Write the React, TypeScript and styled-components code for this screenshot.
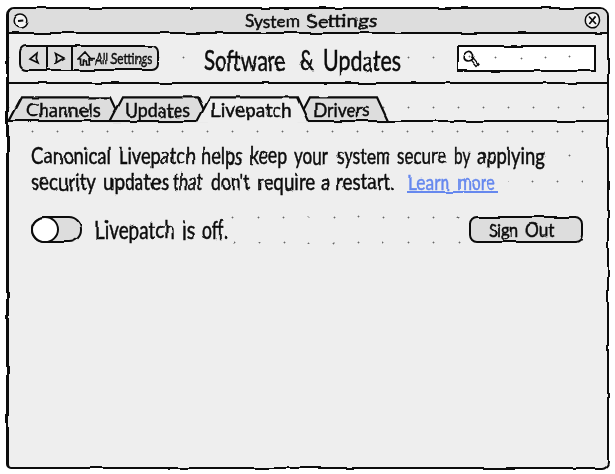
import React, { useLayoutEffect, useRef, useState } from "react";
import styled, { createGlobalStyle } from "styled-components";

const INK = "#0c0c0c";
const PAPER = "#eeeeee";
const SHADE = "#dddddd";
const LINK = "#6688ee";
const DOT = "radial-gradient(circle, #666 0.5px, transparent 1.3px)";

const GlobalStyle = createGlobalStyle`
  body { margin: 0; background: #fff; overflow: hidden; }
  *, *::before, *::after { box-sizing: border-box; }
  button { font: inherit; color: inherit; border: 0; padding: 0; background: none; }
`;

/* ---------- lettering ---------- */

const Line = styled.span<{ $size: number }>`
  display: block;
  white-space: nowrap;
  font-family: Lato, "Liberation Sans", sans-serif;
  font-size: ${(p) => p.$size}px;
  font-weight: 400;
  -webkit-text-stroke: 0.5px currentColor;
  word-spacing: -0.256em;
`;

const Slot = styled.span<{ $width: number; $gap: number }>`
  display: inline-block;
  width: ${(p) => p.$width}px;
  margin-right: ${(p) => p.$gap}px;
`;

const Glyphs = styled.span`
  display: inline-block;
  transform-origin: 0 50%;
`;

function Word({ text, width, gap }: { text: string; width: number; gap: number }) {
  const ref = useRef<HTMLSpanElement>(null);
  const [scale, setScale] = useState(1);
  useLayoutEffect(() => {
    if (ref.current) setScale(width / ref.current.offsetWidth);
  }, [text, width]);
  return (
    <Slot $width={width} $gap={gap}>
      <Glyphs ref={ref} style={{ transform: `scaleX(${scale})` }}>{text}</Glyphs>
    </Slot>
  );
}

/* Each entry is a word, its drawn width and the gap after it. */
type Lettering = [string, number, number][];

function Script({ words, size }: { words: Lettering; size: number }) {
  return (
    <Line $size={size}>
      {words.map(([text, width, gap], i) => (
        <React.Fragment key={i}>
          {i > 0 && " "}
          <Word text={text} width={width} gap={gap} />
        </React.Fragment>
      ))}
    </Line>
  );
}

/* ---------- window ---------- */

const Desk = styled.div`
  width: 615px;
  height: 474px;
  padding: 7px 6px 5px 6px;
`;

const Window = styled.main`
  height: 462px;
  display: flex;
  flex-direction: column;
  color: ${INK};
  background: ${PAPER};
  border: 2px solid ${INK};
  border-width: 2px 2px 2px 3px;
  border-radius: 8px 9px 7px 5px;
  overflow: hidden;
  filter: url(#wobble);
`;

const Defs = styled.svg`
  position: absolute;
  width: 0;
  height: 0;
`;

const TitleBar = styled.header`
  height: 25px;
  flex: none;
  display: grid;
  grid-template-columns: 1fr auto 1fr;
  align-items: center;
  padding: 0 6px 0 4px;
  background: ${SHADE};
  border-bottom: 2px solid ${INK};
  line-height: 23px;
`;

const TitleText = styled.div`
  padding-left: 8px;
`;

const RoundButton = styled.button<{ $end?: boolean }>`
  display: flex;
  justify-self: ${(p) => (p.$end ? "end" : "start")};
`;

const Header = styled.div`
  height: 50px;
  flex: none;
  display: flex;
  align-items: center;
  padding: 0 11px 0 10px;
  border-bottom: 2px solid ${INK};
  background: ${DOT} 162px 11px / 25px 25px repeat-x;
`;

const NavGroup = styled.nav`
  width: 140px;
  height: 26px;
  display: flex;
  background: ${SHADE};
  border: 2px solid ${INK};
  border-radius: 7px;
`;

const NavButton = styled.button<{ $wide?: boolean }>`
  width: ${(p) => (p.$wide ? "auto" : "25px")};
  flex: ${(p) => (p.$wide ? "1" : "none")};
  display: flex;
  align-items: center;
  justify-content: ${(p) => (p.$wide ? "flex-start" : "center")};
  padding-left: ${(p) => (p.$wide ? "4px" : "0")};
  line-height: 24px;
  & + & { border-left: 2px solid ${INK}; }
`;

const NavLabel = styled.span``;

const Heading = styled.h1`
  margin: 0 0 0 45px;
  padding-top: 3px;
  background: ${PAPER};
  line-height: 40px;
  font-weight: 400;
`;

const Search = styled.label`
  width: 139px;
  height: 27px;
  margin-left: auto;
  padding: 3px 4px;
  display: flex;
  border: 2px solid ${INK};
  background: ${DOT} 24px -2px / 25px 25px repeat-x #fff;
`;

/* ---------- tabs ---------- */

const TabBar = styled.div`
  height: 38px;
  flex: none;
  display: flex;
  align-items: flex-end;
  background:
    linear-gradient(${INK}, ${INK}) 0 100% / 100% 2px no-repeat,
    ${DOT} 387px 11px / 25px 25px repeat-x;
`;

const TabButton = styled.button<{ $width: number; $inset: number }>`
  position: relative;
  width: ${(p) => p.$width}px;
  height: 26px;
  margin-right: -13px;
  padding-left: ${(p) => p.$inset}px;
  line-height: 26px;
  text-align: left;
`;

const TabShape = styled.svg`
  position: absolute;
  inset: 0;
  overflow: visible;
`;

const TabLabel = styled.span`
  position: relative;
  display: block;
`;

const TabStrip = styled.div`
  display: flex;
  isolation: isolate;
  width: 381px;
  ${TabButton}[aria-selected="true"] { z-index: 2; }
`;

interface TabSpec { label: string; width: number; inset: number; ink: number; active?: boolean }

const TABS: TabSpec[] = [
  { label: "Channels", width: 113, inset: 17, ink: 75 },
  { label: "Updates", width: 101, inset: 16, ink: 65 },
  { label: "Livepatch", width: 113, inset: 14, ink: 81, active: true },
  { label: "Drivers", width: 92, inset: 17, ink: 56 },
];

function Tab({ label, width, inset, ink, active }: TabSpec) {
  const outline = `M0.5 25 L13 1.3 H${width - 12} L${width - 1} 25`;
  return (
    <TabButton role="tab" aria-selected={!!active} $width={width} $inset={inset}>
      <TabShape width={width} height={26}>
        <path d={`${outline} V26.5 H0.5 Z`} fill={active ? PAPER : SHADE} />
        <path d={outline} fill="none" stroke={INK} strokeWidth={2.2} />
        {!active && <path d={`M0 25 H${width}`} stroke={INK} strokeWidth={2} />}
      </TabShape>
      <TabLabel><Script size={20} words={[[label, ink, 0]]} /></TabLabel>
    </TabButton>
  );
}

/* ---------- content ---------- */

const Content = styled.section`
  flex: 1;
  padding: 20px 24px 0 22px;
  background: ${DOT} 11px -3px / 25px 25px repeat-x;
`;

const Message = styled.div`
  height: 74px;
  line-height: 26px;
`;

const MessageRow = styled.div<{ $dots: number }>`
  display: flex;
  align-items: center;
  height: 26px;
  &::after {
    content: "";
    width: ${(p) => p.$dots}px;
    height: 25px;
    margin-left: auto;
    background: ${DOT} 12px 0 / 25px 25px;
  }
`;

const Link = styled.a`
  height: 24px;
  margin-left: 11px;
  padding-left: 2px;
  width: 93px;
  line-height: 26px;
  color: ${LINK};
  border-bottom: 2px solid ${LINK};
`;

const Controls = styled.div`
  height: 27px;
  display: flex;
  align-items: center;
`;

const Toggle = styled.button`
  width: 51px;
  height: 27px;
  display: flex;
  background: ${SHADE};
  border: 2px solid ${INK};
  border-radius: 13px;
`;

const Knob = styled.span`
  width: 28px;
  height: 27px;
  margin: -2px;
  background: #fff;
  border: 2px solid ${INK};
  border-radius: 50%;
`;

const Status = styled.span`
  margin-left: 13px;
  padding-top: 1px;
  line-height: 26px;
`;

const DotField = styled.span`
  width: 238px;
  height: 50px;
  background: ${DOT} -6px 0 / 25px 25px;
`;

const SignOut = styled.button`
  width: 114px;
  height: 27px;
  margin-left: auto;
  padding-left: 17px;
  line-height: 24px;
  text-align: left;
  background: ${SHADE};
  border: 2px solid ${INK};
  border-radius: 8px;
`;

export default function App() {
  return (
    <>
      <GlobalStyle />
      <Defs aria-hidden="true">
        <filter id="wobble" x="-2%" y="-2%" width="104%" height="104%" colorInterpolationFilters="sRGB">
          <feTurbulence type="fractalNoise" baseFrequency="0.04" numOctaves="2" seed="8" result="noise" />
          <feDisplacementMap in="SourceGraphic" in2="noise" scale="3.2" xChannelSelector="R" yChannelSelector="G" />
        </filter>
      </Defs>
      <Desk>
        <Window>
          <TitleBar>
            <RoundButton aria-label="Minimize">
              <svg width="16" height="16" fill="#f4f4f4" stroke={INK} strokeWidth="1.6">
                <ellipse cx="8" cy="8" rx="6.8" ry="7" />
                <path d="M5 8 L11.3 7.6" strokeWidth="2" />
              </svg>
            </RoundButton>
            <TitleText>
              <Script size={18} words={[["System", 55, 6], ["Settings", 71, 0]]} />
            </TitleText>
            <RoundButton $end aria-label="Close">
              <svg width="17" height="17" fill="#f4f4f4" stroke={INK} strokeWidth="1.5">
                <path d="M3 3.5 C6 0 12 0 14 3 C17 8 15 13 12 15 C8 17 3 15 1.7 11 C1 8 1.4 5 3 3.5 Z" />
                <path d="M5 4.5 L12 12 M11.6 4.4 L5.3 12" strokeWidth="1.7" />
              </svg>
            </RoundButton>
          </TitleBar>

          <Header>
            <NavGroup>
              <NavButton aria-label="Back">
                <svg width="12" height="14" fill="none" stroke={INK} strokeWidth="1.7">
                  <path d="M9 2.2 L2 8 L10 11.8 L8.3 7.5 Z" />
                </svg>
              </NavButton>
              <NavButton aria-label="Forward">
                <svg width="13" height="14" fill="none" stroke={INK} strokeWidth="1.7">
                  <path d="M2.5 2.5 L11 7 L3 11.8 L3.8 7 Z" />
                </svg>
              </NavButton>
              <NavButton $wide>
                <svg width="19" height="16" fill="none" stroke={INK} strokeWidth="1.6">
                  <path d="M1 9 L8 2 L14 9 L12 8.8 L12.5 14 L9.6 14 L9.3 10 L6.5 10 L6.3 14 L3.5 14 L3.6 9 Z M14 8.6 L18 8.6" />
                </svg>
                <NavLabel><Script size={15.5} words={[["All", 12, 3], ["Settings", 41, 0]]} /></NavLabel>
              </NavButton>
            </NavGroup>
            <Heading>
              <Script size={28} words={[["Software", 81, 14], ["&", 15, 9], ["Updates", 78, 0]]} />
            </Heading>
            <Search aria-label="Search">
              <svg width="17" height="18" fill="none" stroke={INK} strokeWidth="1.7">
                <path d="M6 1.5 C3 2 0.8 6 1.2 9 C2 12.5 7 13 9.5 10 C12 6.5 9.5 1 6 1.5 Z" />
                <path d="M8.5 11.3 L10.5 9.3 L15 14.5 L13 16.5 Z" strokeWidth="1.3" />
              </svg>
            </Search>
          </Header>

          <TabBar role="tablist">
            <TabStrip>
              {TABS.map((tab) => <Tab key={tab.label} {...tab} />)}
            </TabStrip>
          </TabBar>

          <Content>
            <Message>
              <MessageRow $dots={50}>
                <Script size={23} words={[
                  ["Canonical", 80, 7], ["Livepatch", 77, 6], ["helps", 42, 7], ["keep", 37, 7],
                  ["your", 34, 8], ["system", 55, 6], ["secure", 49, 8], ["by", 16, 7], ["applying", 68, 0],
                ]} />
              </MessageRow>
              <MessageRow $dots={75}>
                <Script size={23} words={[
                  ["security", 65, 7], ["updates", 66, 4], ["that", 30, 8], ["don't", 39, 7],
                  ["require", 58, 6], ["a", 9, 6], ["restart.", 59, 0],
                ]} />
                <Link href="#"><Script size={22} words={[["Learn", 42, 7], ["more", 39, 0]]} /></Link>
              </MessageRow>
            </Message>
            <Controls>
              <Toggle role="switch" aria-checked={false} aria-label="Livepatch"><Knob /></Toggle>
              <Status><Script size={24.5} words={[["Livepatch", 80, 7], ["is", 14, 6], ["off.", 25, 0]]} /></Status>
              <DotField />
              <SignOut><Script size={19} words={[["Sign", 31, 6], ["Out", 29, 0]]} /></SignOut>
            </Controls>
          </Content>
        </Window>
      </Desk>
    </>
  );
}
